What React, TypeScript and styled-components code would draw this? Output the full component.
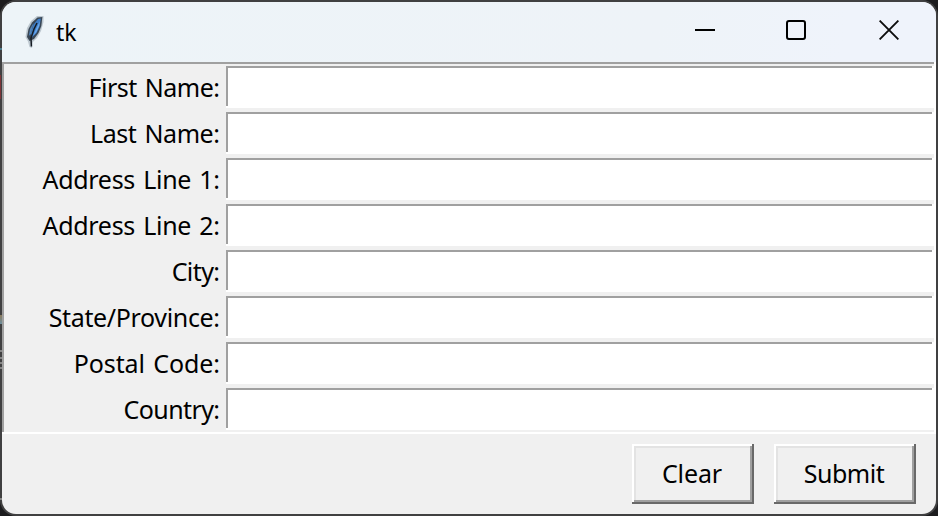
import React from "react";
import styled, { createGlobalStyle } from "styled-components";

const GlobalStyle = createGlobalStyle`
  * { box-sizing: border-box; }
  body { margin: 0; background: #1c1c1e; overflow: hidden; }
`;

const Desktop = styled.div`
  width: 938px;
  height: 516px;
  padding: 2px;
  background: #1c1c1e;
  font-family: "Noto Sans", "Open Sans", sans-serif;
  color: #000;
`;

const Window = styled.div`
  width: 934px;
  height: 512px;
  display: flex;
  flex-direction: column;
  border-radius: 14px;
  overflow: hidden;
  background: #f0f0f0;
  box-shadow: 0 0 0 2px #404041;
`;

const Backdrop = styled.div`
  position: absolute;
  left: 0;
  top: 0;
  width: 2px;
  height: 516px;
  background:
    linear-gradient(#7d3438, #7d3438) 0 75px / 1px 24px no-repeat,
    linear-gradient(#4d7c8c, #4d7c8c) 0 48px / 2px 2px no-repeat,
    linear-gradient(#8b7a5c, #6e8f9e) 0 315px / 2px 9px no-repeat,
    linear-gradient(#858585, #858585) 0 350px / 2px 2px no-repeat,
    linear-gradient(#858585, #858585) 0 357px / 2px 2px no-repeat,
    linear-gradient(#858585, #858585) 0 362px / 2px 2px no-repeat,
    linear-gradient(#858585, #858585) 0 367px / 2px 2px no-repeat,
    linear-gradient(#858585, #858585) 0 498px / 2px 2px no-repeat;
`;

const TitleBar = styled.header`
  height: 60px;
  flex: none;
  display: flex;
  align-items: flex-start;
  background: linear-gradient(100deg, #edf4f8 0%, #eef3f8 70%, #eff3fb 90%);
`;

const AppIcon = styled.svg`
  width: 20px;
  height: 34px;
  margin: 12px 0 0 22px;
`;

const Title = styled.h1`
  flex: 1;
  margin: 0 0 0 12px;
  font-size: 23px;
  font-weight: 400;
  line-height: 60px;
`;

const Controls = styled.div`
  display: flex;
`;

const Control = styled.button<{ $width: number }>`
  width: ${(p) => p.$width}px;
  height: 56px;
  padding: 0;
  border: 0;
  background: none;
  display: grid;
  place-items: center;
`;

const Form = styled.form`
  height: 372px;
  flex: none;
  padding: 2px;
  box-shadow: inset -2px -2px #fff, inset 2px 2px #a0a0a0;
`;

const Row = styled.label`
  height: 46px;
  display: grid;
  grid-template-columns: 216px 1fr;
  column-gap: 6px;
  padding: 2px 0;
`;

const LabelText = styled.span<{ $spacing: number }>`
  text-align: right;
  white-space: nowrap;
  font-size: 25px;
  line-height: 42px;
  word-spacing: 2px;
  letter-spacing: ${(p) => p.$spacing}px;
  margin-right: ${(p) => -p.$spacing}px;
`;

const Entry = styled.input`
  width: 100%;
  height: 42px;
  padding: 2px 4px;
  border: 0;
  border-radius: 0;
  outline: 0;
  background: #fff;
  font: inherit;
  font-size: 25px;
  box-shadow: inset -2px -2px #fff, inset 2px 2px #a0a0a0;
`;

const Actions = styled.footer`
  flex: 1;
  display: flex;
  justify-content: flex-end;
  align-items: flex-start;
  gap: 20px;
  padding: 10px 20px 0 0;
`;

const Button = styled.button<{ $width: number; $spacing: number }>`
  width: ${(p) => p.$width}px;
  height: 60px;
  padding: 0 2px 2px 0;
  border: 0;
  background: #f0f0f0;
  color: #000;
  font: inherit;
  font-size: 25px;
  letter-spacing: ${(p) => p.$spacing}px;
  box-shadow: inset -2px -2px #696969, inset 2px 2px #fff,
    inset -4px -4px #a0a0a0, inset 4px 4px #e3e3e3;
`;

const fields = [
  { label: "First Name:", spacing: -0.5 },
  { label: "Last Name:", spacing: -0.42 },
  { label: "Address Line 1:", spacing: -0.3 },
  { label: "Address Line 2:", spacing: -0.3 },
  { label: "City:", spacing: -0.6 },
  { label: "State/Province:", spacing: -0.35 },
  { label: "Postal Code:", spacing: -0.1 },
  { label: "Country:", spacing: -0.6 },
];

function Feather() {
  return (
    <AppIcon viewBox="0 0 20 34">
      <path d="M19.5 2 L13 2 L7 7 L3 14 L1.5 23 L4 27.5 L5.5 33 L8 34 L8.8 28 L13 24 L17 17 L19.5 8 Z" fill="#8b99a6" opacity=".5" />
      <path d="M18.4 3 L13.5 3.5 L8 8.5 L4.5 15 L3 23 L5.5 27 L10 25 L14.5 19 L17.3 12 Z" fill="#394654" />
      <path d="M16.8 4.5 L14 5 L9.5 10.5 L7 19 L7.5 24 L12.5 19 L15.7 12 Z" fill="#3d7cc6" />
      <path d="M16 7 L12.5 14 L9 22 L12.5 18 L15.2 12 Z" fill="#69a8ec" />
      <path d="M9.5 9 L6 15 L4.8 22 L7 20 Z" fill="#4f82b8" />
      <path d="M13 9 L10 15 L7 24 L7.4 32.5" fill="none" stroke="#151b22" strokeWidth="1.5" />
    </AppIcon>
  );
}

export default function App() {
  return (
    <>
      <GlobalStyle />
      <Desktop>
        <Window>
          <TitleBar>
            <Feather />
            <Title>tk</Title>
            <Controls>
              <Control $width={90} aria-label="Minimize">
                <svg width="20" height="20"><path d="M0 10H20" stroke="#000" strokeWidth="2" /></svg>
              </Control>
              <Control $width={92} aria-label="Maximize">
                <svg width="20" height="20"><rect x="1" y="1" width="18" height="18" rx="2" fill="none" stroke="#000" strokeWidth="2" /></svg>
              </Control>
              <Control $width={94} aria-label="Close">
                <svg width="20" height="20"><path d="M.6.6 19.4 19.4M19.4.6.6 19.4" stroke="#0c0c0c" strokeWidth="1.9" /></svg>
              </Control>
            </Controls>
          </TitleBar>
          <Form>
            {fields.map((f) => (
              <Row key={f.label}>
                <LabelText $spacing={f.spacing}>{f.label}</LabelText>
                <Entry />
              </Row>
            ))}
          </Form>
          <Actions>
            <Button $width={122} $spacing={-0.1}>Clear</Button>
            <Button $width={142} $spacing={-0.5}>Submit</Button>
          </Actions>
        </Window>
        <Backdrop />
      </Desktop>
    </>
  );
}
